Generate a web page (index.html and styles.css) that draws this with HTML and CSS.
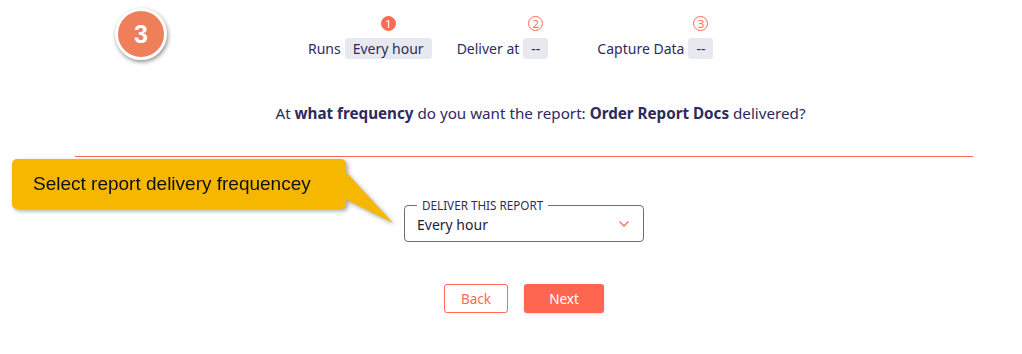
FILE: index.html
```html
<!DOCTYPE html>
<html lang="en">
<head>
    <meta charset="UTF-8">
    <title>Report Schedule</title>
    <link rel="stylesheet" href="styles.css">
</head>
<body>
    <div class="page">
        <div class="step-badge">3</div>

        <div class="stepper">
            <div class="step">
                <span class="step-label">Runs</span>
                <div class="step-value">
                    <span class="step-dot active">1</span>
                    <span class="pill">Every hour</span>
                </div>
            </div>
            <div class="step step-two">
                <span class="step-label">Deliver at</span>
                <div class="step-value">
                    <span class="step-dot">2</span>
                    <span class="pill">--</span>
                </div>
            </div>
            <div class="step step-three">
                <span class="step-label">Capture Data</span>
                <div class="step-value">
                    <span class="step-dot">3</span>
                    <span class="pill">--</span>
                </div>
            </div>
        </div>

        <div class="content">
            <p class="question">At <b>what frequency</b> do you want the report: <b>Order Report Docs</b> delivered?</p>
            <div class="divider"></div>

            <div class="select-field">
                <span class="select-label">DELIVER THIS REPORT</span>
                <span class="select-value">Every hour</span>
                <svg class="chevron" width="12" height="8" viewBox="0 0 12 8">
                    <path d="M1.5 1.5 L6 6 L10.5 1.5" fill="none" stroke="#f0846c" stroke-width="1.6"/>
                </svg>
            </div>

            <div class="actions">
                <button class="btn btn-back">Back</button>
                <button class="btn btn-next">Next</button>
            </div>
        </div>

        <!-- tutorial callout pointing at the select -->
        <div class="callout">
            <svg class="callout-tail" width="60" height="70" viewBox="0 0 60 70">
                <path d="M0 12 L48 64 L0 40 Z" fill="#f5b700"/>
            </svg>
            <div class="callout-box">Select report delivery frequencey</div>
        </div>
    </div>
</body>
</html>
```

FILE: styles.css
```css
body {
    margin: 0;
    background: #fff;
    font-family: "Noto Sans", "Open Sans", sans-serif;
    color: #2d2b5e;
}
.page {
    position: relative;
    width: 1022px;
    height: 354px;
    overflow: hidden;
}
.step-badge {
    position: absolute;
    left: 115px;
    top: 8px;
    width: 46px;
    height: 46px;
    border-radius: 50%;
    background: #ef7e5a;
    border: 3px solid #fff;
    box-shadow: 1px 2px 4px rgba(0,0,0,0.45);
    color: #fff;
    font-family: "Liberation Sans", Arial, sans-serif;
    font-weight: bold;
    font-size: 25px;
    display: flex;
    align-items: center;
    justify-content: center;
}
.stepper {
    display: flex;
    align-items: flex-end;
    padding-left: 308px;
    padding-top: 16px;
    font-size: 14px;
}
.step {
    display: flex;
    align-items: flex-end;
}
.step-two {
    margin-left: 25px;
}
.step-three {
    margin-left: 49px;
}
.step-label {
    line-height: 21px;
    margin-right: 4px;
}
.step-value {
    display: flex;
    flex-direction: column;
    align-items: center;
}
.step-dot {
    width: 15px;
    height: 15px;
    box-sizing: border-box;
    border-radius: 50%;
    border: 1px solid #ff6a55;
    color: #ff6a55;
    font-size: 11.5px;
    line-height: 13px;
    text-align: center;
    margin-bottom: 7px;
}
.step-dot.active {
    background: #ff6a55;
    color: #fff;
}
.pill {
    background: #e8e9ef;
    border-radius: 3px;
    padding: 0 8px;
    line-height: 21px;
}
.content {
    margin: 0 49px 0 75px;
}
.question {
    margin: 0;
    padding-top: 44px;
    padding-left: 33px;
    text-align: center;
    font-size: 15.2px;
    line-height: 20px;
}
.question b {
    font-weight: 700;
}
.divider {
    margin-top: 33px;
    height: 1px;
    background: #ff6a5b;
}
.select-field {
    position: relative;
    width: 240px;
    height: 37px;
    box-sizing: border-box;
    margin: 48px auto 0;
    padding: 0 12px;
    border: 1px solid #6b6f7c;
    border-radius: 4px;
    display: flex;
    align-items: center;
}
.select-label {
    position: absolute;
    left: 12px;
    top: -8px;
    padding: 0 5px;
    background: #fff;
    font-size: 11.7px;
    line-height: 14px;
    color: #2d2b5e;
}
.select-value {
    font-size: 14px;
    color: #1e1c3a;
    margin-top: 1px;
}
.chevron {
    position: absolute;
    right: 13px;
    top: 14px;
}
.actions {
    display: flex;
    justify-content: center;
    gap: 16px;
    margin-top: 42px;
}
.btn {
    height: 29px;
    border-radius: 3px;
    font-family: inherit;
    font-size: 13.5px;
    cursor: pointer;
}
.btn-back {
    width: 64px;
    background: #fff;
    color: #ff6a55;
    border: 1px solid #ff6a55;
}
.btn-next {
    width: 80px;
    background: #ff6652;
    color: #fff;
    border: none;
    box-shadow: 0 1px 3px rgba(0,0,0,0.15);
}
.callout {
    position: absolute;
    left: 12px;
    top: 159px;
    filter: drop-shadow(2px 2px 2px rgba(0,0,0,0.35));
}
.callout-box {
    position: relative;
    width: 334px;
    height: 50px;
    box-sizing: border-box;
    background: #f5b700;
    border-radius: 5px;
    padding-left: 21px;
    font-family: "Liberation Sans", Arial, sans-serif;
    font-size: 19px;
    line-height: 50px;
    color: #111;
}
.callout-tail {
    position: absolute;
    left: 333px;
    top: 0;
}
```
